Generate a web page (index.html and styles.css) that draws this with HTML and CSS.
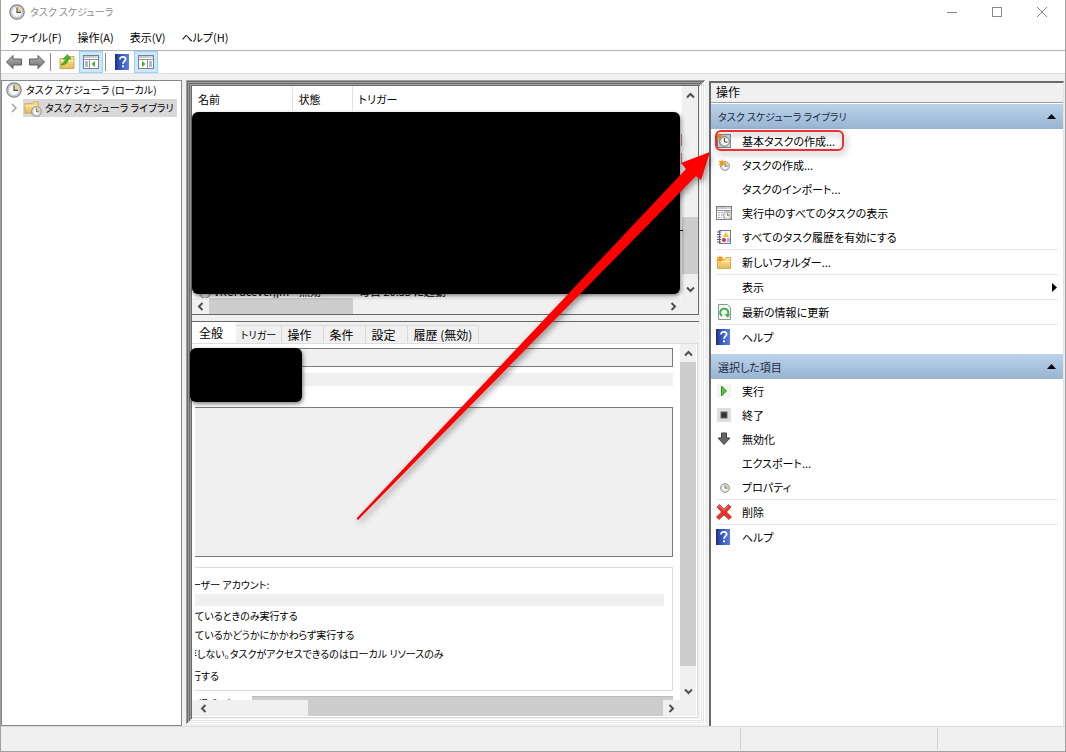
FILE: index.html
```html
<!DOCTYPE html>
<html lang="ja">
<head>
<meta charset="utf-8">
<title>タスク スケジューラ</title>
<link rel="stylesheet" href="styles.css">
</head>
<body>
<svg class="defs" aria-hidden="true">
  <defs>
    <linearGradient id="gArrow" x1="0" y1="0" x2="0" y2="1"><stop offset="0" stop-color="#b5b5b5"/><stop offset="1" stop-color="#6f6f6f"/></linearGradient>
    <linearGradient id="gFolder" x1="0" y1="0" x2="0" y2="1"><stop offset="0" stop-color="#fbe49c"/><stop offset="1" stop-color="#e6bd58"/></linearGradient>
    <linearGradient id="gHelp" x1="0" y1="0" x2="1" y2="0"><stop offset="0" stop-color="#1f3a9a"/><stop offset=".3" stop-color="#2f50bd"/><stop offset="1" stop-color="#5b7ee0"/></linearGradient>
    <symbol id="clock" viewBox="0 0 16 16">
      <circle cx="8" cy="8" r="7.2" fill="#d3d7dc" stroke="#80868c" stroke-width="1.2"/>
      <circle cx="8" cy="8" r="5.4" fill="#f6f9fc" stroke="#a4a9ae" stroke-width=".6"/>
      <path d="M8 8V3a5 5 0 0 1 5 5z" fill="#f4cf7e"/>
      <path d="M8 3.6V8.4H12" fill="none" stroke="#444c58" stroke-width="1.1"/>
    </symbol>
    <symbol id="help" viewBox="0 0 14 16">
      <rect width="14" height="16" fill="url(#gHelp)"/><rect width="2" height="16" fill="#26366f"/>
      <path d="M5 5.4C5 3.5 6.200 2.800 7.800 2.800S10.600 3.700 10.600 5.200C10.600 7 8 7.300 8 9.800" fill="none" stroke="#fff" stroke-width="1.800"/>
      <rect x="7" y="11.300" width="2" height="2" fill="#fff"/>
    </symbol>
    <symbol id="folder" viewBox="0 0 16 16">
      <path d="M1 4.500h8l1-2h5v12H1z" fill="url(#gFolder)" stroke="#c99a35" stroke-width=".8"/>
      <path d="M1.500 7h13" stroke="#fdf0c0"/>
    </symbol>
    <symbol id="pane" viewBox="0 0 16 14">
      <rect x=".5" y=".5" width="15" height="13" fill="#fff" stroke="#7c8188"/>
      <path d="M1 2h14M1 4.500h14" stroke="#8e949c"/>
      <path d="M11 2h1M13 2h1" stroke="#fff"/>
    </symbol>
    <symbol id="spark" viewBox="0 0 8 8"><path d="M4 0l.9 2.300L7.500 1.500 6 4l2 1.500-2.600.2L4 8 3 5.700.2 6 2 4 .5 1.500l2.600.8z" fill="#f09a1a"/></symbol>
  </defs>
</svg>
<div class="window">
  <header class="titlebar">
    <svg class="ico16"><use href="#clock"/></svg>
    <h1 class="title">タスク スケジューラ</h1>
    <div class="caption">
      <button class="capbtn" aria-label="最小化"><svg width="12" height="12"><path d="M1 6.500h10" stroke="#8a8a8a"/></svg></button>
      <button class="capbtn" aria-label="最大化"><svg width="12" height="12"><rect x="1.500" y="1.500" width="9" height="9" fill="none" stroke="#8a8a8a"/></svg></button>
      <button class="capbtn" aria-label="閉じる"><svg width="12" height="12"><path d="M1 1l10 10M11 1L1 11" stroke="#8a8a8a"/></svg></button>
    </div>
  </header>
  <nav class="menubar">
    <button>ファイル(F)</button><button>操作(A)</button><button>表示(V)</button><button>ヘルプ(H)</button>
  </nav>
  <div class="toolbar">
    <button class="tool narrow" aria-label="戻る"><svg width="18" height="16" viewBox="0 0 18 16"><path d="M1.500 8L8 1.500V5h8.500v6H8v3.500z" fill="url(#gArrow)" stroke="#5c5c5c"/></svg></button>
    <button class="tool narrow" aria-label="進む"><svg width="18" height="16" viewBox="0 0 18 16"><path d="M16.500 8L10 1.500V5H1.500v6H10v3.500z" fill="url(#gArrow)" stroke="#5c5c5c"/></svg></button>
    <span class="toolsep"></span>
    <button class="tool" aria-label="上へ"><svg width="16" height="16"><use href="#folder"/><path d="M2 11C3 9 6 8 6.500 5H4L8.500.5 12 5H9.500C9 9 6 11 2 11z" fill="#3fb52c" stroke="#2b8a20" stroke-width=".5"/></svg></button>
    <button class="tool on" aria-label="コンソール ツリーの表示"><svg width="16" height="14"><use href="#pane" width="16" height="14"/><path d="M6.500 5v8" stroke="#8e949c"/><path d="M2 7h3M2 9h3M2 11h3" stroke="#4d79b5"/><path d="M12 6v6L8.500 9z" fill="#45b02f"/></svg></button>
    <span class="toolsep"></span>
    <button class="tool" aria-label="ヘルプ"><svg width="14" height="16"><use href="#help"/></svg></button>
    <button class="tool on" aria-label="操作ウィンドウの表示"><svg width="16" height="14"><use href="#pane" width="16" height="14"/><path d="M9.500 5v8" stroke="#8e949c"/><path d="M11 7h3M11 9h3M11 11h3" stroke="#4d79b5"/><path d="M4 6v6L7.500 9z" fill="#45b02f"/></svg></button>
  </div>

  <main class="work">
    <aside class="tree">
      <a class="node root" href="#root"><svg class="ico16"><use href="#clock"/></svg><span>タスク スケジューラ (ローカル)</span></a>
      <div class="branch">
        <svg width="8" height="10"><path d="M2 1l4 4-4 4" fill="none" stroke="#a0a0a0" stroke-width="1.500"/></svg>
        <a class="node sel" href="#library"><svg width="18" height="18"><use href="#folder" width="15" height="16"/><use href="#clock" x="7" y="7" width="11" height="11"/></svg><span>タスク スケジューラ ライブラリ</span></a>
      </div>
    </aside>

    <section class="centre">
      <div class="tasks">
        <div class="listview">
          <table class="list">
            <thead><tr><th class="cname">名前</th><th class="cstate">状態</th><th>トリガー</th></tr></thead>
            <tbody><tr class="gap"><td colspan="3"></td></tr><tr><td><svg width="12" height="12"><use href="#clock"/></svg> VRCFaceVer,jm</td><td>無効</td><td>毎日 20:33 に起動</td></tr></tbody>
          </table>
        </div>
        <div class="vbar">
          <button aria-label="上へスクロール"><svg width="9" height="7"><path d="M1 5.500l3.500-3.500L8 5.500" class="chev"/></svg></button>
          <span class="grow"></span><span class="thumb short"></span>
          <button class="down" aria-label="下へスクロール"><svg width="9" height="7"><path d="M1 1.500L4.500 5 8 1.500" class="chev"/></svg></button>
        </div>
        <div class="hbar">
          <button aria-label="左へスクロール"><svg width="7" height="9"><path d="M5.500 1L2 4.500 5.500 8" class="chev"/></svg></button>
          <span class="thumb first"></span><span class="grow"></span>
          <button aria-label="右へスクロール"><svg width="7" height="9"><path d="M1.500 1L5 4.500 1.500 8" class="chev"/></svg></button>
        </div>
      </div>

      <div class="detail">
        <div class="tabs" role="tablist">
          <button role="tab" class="tab active">全般</button><button role="tab" class="tab trig">トリガー</button><button role="tab" class="tab">操作</button><button role="tab" class="tab">条件</button><button role="tab" class="tab">設定</button><button role="tab" class="tab wide">履歴 (無効)</button>
        </div>
        <div class="page">
          <div class="form">
            <input class="field" aria-label="名前" readonly>
            <div class="strip"></div>
            <textarea class="desc" aria-label="説明" readonly></textarea>
            <div class="group">
              <p class="line cut4">ーザー アカウント:</p>
              <div class="strip account"></div>
              <p class="line">ているときのみ実行する</p>
              <p class="line">ているかどうかにかかわらず実行する</p>
              <p class="line cut8">存しない。タスクがアクセスできるのはローカル リソースのみ</p>
              <p class="line last cut4">行する</p>
            </div>
            <div class="config"><span class="label">構成(ビ):</span><span class="combo"></span></div>
          </div>
          <div class="vbar">
            <button aria-label="上へスクロール"><svg width="9" height="7"><path d="M1 5.500l3.500-3.500L8 5.500" class="chev"/></svg></button>
            <span class="thumb grow"></span>
            <button class="tall" aria-label="下へスクロール"><svg width="9" height="7"><path d="M1 1.500L4.500 5 8 1.500" class="chev"/></svg></button>
          </div>
          <div class="hbar">
            <button aria-label="左へスクロール"><svg width="7" height="9"><path d="M5.500 1L2 4.500 5.500 8" class="chev"/></svg></button>
            <span class="track"></span><span class="thumb grow"></span>
            <button aria-label="右へスクロール"><svg width="7" height="9"><path d="M1.500 1L5 4.500 1.500 8" class="chev"/></svg></button>
          </div>
          <div class="corner"></div>
        </div>
      </div>
    </section>

    <aside class="actions">
      <h2 class="paneTitle">操作</h2>
      <h3 class="section library"><span>タスク スケジューラ ライブラリ</span><svg width="9" height="5"><path d="M0 5L4.500 0 9 5z"/></svg></h3>
      <div class="items">
        <button class="item"><svg class="ico16"><rect x="1.500" y="1.500" width="13" height="13" fill="#d5d8da" stroke="#858a8e"/><circle cx="8.500" cy="8.500" r="4.800" fill="#f5f8f4" stroke="#5f7d80"/><path d="M8.500 5v4h3" fill="none" stroke="#444"/><use href="#spark" width="7" height="7"/></svg><span>基本タスクの作成...</span></button>
        <button class="item"><svg class="ico16"><use href="#clock" x="4" y="4" width="10" height="10"/><use href="#spark" x="2" y="2" width="8" height="8"/></svg><span>タスクの作成...</span></button>
        <button class="item"><svg class="ico16"></svg><span>タスクのインポート...</span></button>
        <button class="item"><svg class="ico16"><use href="#pane" y="1" width="16" height="14"/><path d="M2 7.500h6M2 10h5M2 12.500h4" stroke="#9aa0a6" stroke-dasharray="2 1"/><use href="#clock" x="7" y="6" width="9" height="9"/></svg><span>実行中のすべてのタスクの表示</span></button>
        <button class="item"><svg class="ico16"><rect x="3.500" y="1.500" width="11" height="13" fill="#f2f3fa" stroke="#73799a"/><path d="M1 3h4M1 5.500h4M1 8h4M1 10.500h4M1 13h4" stroke="#50556a"/><path d="M10 3l3 5H7z" fill="#f2c319"/><circle cx="8" cy="11" r="2" fill="#d93030"/><path d="M11 10h3M11 12h3" stroke="#7280b5"/></svg><span>すべてのタスク履歴を有効にする</span></button>
        <hr>
        <button class="item"><svg class="ico16"><use href="#folder" y="1" width="16" height="15"/><use href="#spark" y="1" width="8" height="8"/></svg><span>新しいフォルダー...</span></button>
        <hr>
        <button class="item"><svg class="ico16"></svg><span>表示</span><svg class="more" width="6" height="9"><path d="M0 0l5 4.500L0 9z"/></svg></button>
        <hr>
        <button class="item"><svg class="ico16"><path d="M2.500.5h9l3 3v12h-12z" fill="#f6f8f6" stroke="#8c9590"/><path d="M6 12A4 4 0 1 1 11.800 10.500" fill="none" stroke="#3db047" stroke-width="2"/><path d="M8.500 10h5.500l-2 4z" fill="#3db047"/></svg><span>最新の情報に更新</span></button>
        <hr>
        <button class="item"><svg class="ico16"><use href="#help" width="14" height="16"/></svg><span>ヘルプ</span></button>
      </div>
      <h3 class="section"><span>選択した項目</span><svg width="9" height="5"><path d="M0 5L4.500 0 9 5z"/></svg></h3>
      <div class="items">
        <button class="item"><svg class="ico16"><rect x="1" y="1" width="14" height="14" fill="#f4f4f4"/><path d="M5.500 3v10l5-5z" fill="#52c43c" stroke="#2d9a22"/></svg><span>実行</span></button>
        <button class="item"><svg class="ico16"><rect x="1" y="1" width="14" height="14" fill="#dedede"/><rect x="5" y="5" width="6" height="6" fill="#333" stroke="#666"/></svg><span>終了</span></button>
        <button class="item"><svg class="ico16"><path d="M5.500 2h5v5h3.500L8 13.500 2 7h3.500z" fill="#666" stroke="#3f3f3f"/></svg><span>無効化</span></button>
        <button class="item"><svg class="ico16"></svg><span>エクスポート...</span></button>
        <button class="item"><svg class="ico16"><use href="#clock" x="4" y="4" width="10" height="10"/></svg><span>プロパティ</span></button>
        <hr>
        <button class="item"><svg class="ico16"><path d="M1 3l2.500-2.500L8 5l4.500-4.500L15 3l-4.500 5L15.500 13 13 15.500 8 11l-5 4.500L.5 13 5.500 8z" fill="#e8352c" stroke="#b3201b" stroke-width=".7"/><path d="M2 3l1.500-1.200L8 6.300l4.500-4.500" fill="none" stroke="#f78a80"/></svg><span>削除</span></button>
        <hr>
        <button class="item"><svg class="ico16"><use href="#help" width="14" height="16"/></svg><span>ヘルプ</span></button>
      </div>
    </aside>
  </main>
  <footer class="status"><span></span><span></span><span></span></footer>

  <div class="mask maskList"></div>
  <div class="mask maskName"></div>
  <svg class="marks" width="1066" height="752" aria-hidden="true">
    <path d="M681.500 134v12M681.500 153v11" stroke="#a06868"/><path d="M680 230.500h3" stroke="#000"/>
    <rect x="716" y="131" width="127" height="19" rx="5" fill="none" stroke="#ed2f35" stroke-width="2"/>
    <path d="M356.500 518.500L686 169l-5-6 29-11-9 28-5-4L358 520z" fill="#fe0000"/>
  </svg>
</div>
</body>
</html>
```
FILE: styles.css
```css
* { box-sizing: border-box; }
body {
  margin: 0;
  font: 12px/16px "Noto Sans CJK JP", sans-serif;
  font-feature-settings: "palt";
  color: #000;
}
button, input, textarea {
  font: inherit;
  font-feature-settings: inherit;
  color: inherit;
  border: 0;
  padding: 0;
  margin: 0;
  background: none;
  border-radius: 0;
}
h1, h2, h3, p { margin: 0; font-size: inherit; font-weight: 400; }
a { color: inherit; text-decoration: none; }
svg { display: block; flex: none; }
.defs { position: absolute; width: 0; height: 0; }
.ico16 { width: 16px; height: 16px; }

.window {
  position: relative;
  display: flex;
  flex-direction: column;
  min-height: 100vh;
  background: #f0f0f0;
  border: 1px solid #a0a0a0;
  border-top: 0;
  overflow: hidden;
}
.titlebar { display: flex; flex: none; align-items: center; gap: 5px; height: 24px; padding-left: 8px; background: #fff; }
.title { flex: 1; color: #909090; font-size: 10px; }
.caption { display: flex; margin-right: 1px; }
.capbtn { display: grid; place-items: center; width: 45px; height: 24px; }
.menubar { display: flex; flex: none; gap: 16px; height: 27px; padding: 0 9px; background: #fff; border-bottom: 1px solid #b2b2bc; font-size: 11px; }
.toolbar { display: flex; flex: none; align-items: center; height: 23px; padding-left: 1px; background: #fff; border-bottom: 1px solid #dcdcdc; }
.tool { display: grid; place-items: center; width: 24px; height: 22px; border: 1px solid transparent; }
.narrow { width: 23px; }
.tool.on { background: #cce8ff; border-color: #99d1ff; }
.toolsep { width: 1px; height: 18px; margin: 0 4px 0 2px; background: #888; }

.work { flex: 1; display: flex; padding-top: 6px; }
.tree { width: 181px; background: #fff; border: 1px solid #828790; overflow: hidden; white-space: nowrap; font-size: 10px; }
.node { display: flex; align-items: center; gap: 4px; height: 18px; }
.root { padding-left: 4px; }
.branch { display: flex; align-items: center; gap: 5px; padding-left: 8px; }
.sel { background: #d9d9d9; gap: 3px; padding: 0 3px 0 1px; }

.centre {
  flex: 1;
  min-width: 0;
  display: flex;
  flex-direction: column;
  gap: 6px;
  margin: 0 4px 2px;
  padding: 6px;
  background: #f0f0f0;
  box-shadow: inset 1px 1px #a0a0a0, inset -1px -1px #fff, inset 2px 2px #696969, inset -2px -2px #e3e3e3,
    inset 3px 3px #a0a0a0, inset -3px -3px #fff, inset 4px 4px #696969, inset -4px -4px #e3e3e3,
    inset 5px 5px #a0a0a0, inset -5px -5px #fff, inset 6px 6px #696969;
}
.tasks, .page { display: grid; grid-template-columns: minmax(0, 1fr) 16px; }
.tasks { grid-template-rows: 212px 16px; background: #f0f0f0; border-right: 1px solid #696969; border-bottom: 1px solid #696969; }
.listview { overflow: hidden; background: #fff; font-size: 11px; }
.list { width: 100%; border-collapse: collapse; table-layout: fixed; }
.list th { height: 25px; padding: 0 6px; font-weight: 400; text-align: left; border-right: 1px solid #e2e2e2; }
.list th:last-child { border-right: 0; }
.list td { height: 18px; padding: 0 7px; white-space: nowrap; }
.list td svg { display: inline-block; vertical-align: middle; }
.list .gap td { height: 171px; }
.cname { width: 100px; }
.cstate { width: 60px; }

.vbar, .hbar { display: flex; background: #f0f0f0; }
.vbar { flex-direction: column; padding-top: 1px; }
.vbar button, .hbar button { display: grid; place-items: center; height: 17px; }
.hbar { height: 16px; }
.hbar button { width: 17px; height: 16px; }
.vbar .down { margin-top: 7px; }
.vbar .tall { margin-top: 17px; }
.thumb { background: #cdcdcd; }
.grow { flex: 1; }
.short { height: 57px; }
.first { width: 144px; }
.track { width: 96px; }
.chev { fill: none; stroke: #505050; stroke-width: 2; }

.detail { flex: 1; display: flex; flex-direction: column; border-top: 1px solid #696969; padding-right: 1px; }
.tabs { display: flex; align-items: flex-end; height: 21px; }
.tab { width: 42px; height: 18px; padding: 0 6px 0 0; border: 1px solid #d9d9d9; border-left: 0; border-bottom: 0; line-height: 15px; text-align: center; white-space: nowrap; }
.tab.active { width: 44px; height: 21px; background: #fff; border: 0; }
.tab.trig { width: 46px; padding: 0; font-size: 10px; }
.tab.wide { width: 71px; padding: 0; }
.page { flex: 1; grid-template-rows: minmax(0, 1fr) 16px; background: #fff; border: solid #dcdcdc; border-width: 1px 1px 1px 0; padding: 0 1px 1px 0; }
.form { display: flex; flex-direction: column; overflow: hidden; padding: 4px 7px 0 3px; }
.field { height: 19px; background: #f0f0f0; border: 1px solid #7a7a7a; border-left: 0; }
.strip { height: 13px; margin-top: 6px; background: #f0f0f0; }
.desc { display: block; height: 150px; margin-top: 21px; background: #f0f0f0; border: 1px solid #7a7a7a; border-left: 0; resize: none; }
.group { margin-top: 10px; height: 124px; padding-top: 7px; border: 1px solid #dcdcdc; border-left: 0; font-size: 10px; }
.line { height: 19px; line-height: 19px; overflow: hidden; white-space: nowrap; }
.account { height: 12px; margin: 0 8px 0 0; }
.last { margin-top: 3px; }
.cut4 { text-indent: -4px; }
.cut8 { text-indent: -8px; }
.config { display: flex; gap: 8px; height: 4px; margin-top: 5px; font-size: 10px; overflow: hidden; }
.label { width: 49px; padding-left: 3px; }
.combo { flex: 1; background: #cdcdcd; border-top: 1px solid #bcbcbc; }
.page > .hbar { padding-left: 3px; }
.corner { background: #f0f0f0; }

.actions { width: 355px; margin-right: 1px; background: #fff; border: solid #696969; border-width: 2px 0 0 2px; border-right: 1px solid #e3e3e3; margin-top: 1px; font-size: 11px; }
.paneTitle { height: 20px; padding-left: 5px; line-height: 18px; background: #f0f0f0; border-bottom: 1px solid #a0a0a0; margin-bottom: 1px; font-size: 12px; }
.section { display: flex; align-items: center; justify-content: space-between; height: 25px; padding: 0 7px; background: linear-gradient(#bbd3eb, #99b4d1); color: #1c2a3c; }
.library { font-size: 10px; }
.section svg { fill: #000; }
.items { padding: 0 5px; }
.items:not(:last-child) { padding-bottom: 5px; }
.item { display: flex; align-items: center; gap: 10px; width: 100%; height: 24px; text-align: left; }
.more { margin-left: auto; }
.items hr { height: 1px; margin: 0; border: 0; background: #e8e8e8; }

.status { display: flex; flex: none; height: 25px; border-top: 1px solid #dcdcdc; }
.status span { border-right: 1px solid #d0d0d0; margin: 1px 0; }
.status span:nth-child(1) { flex: 1; }
.status span:nth-child(2) { width: 197px; }
.status span:nth-child(3) { width: 127px; border: 0; }

.mask { position: absolute; background: #000; border-radius: 6px; box-shadow: 1px 2px 4px rgba(0, 0, 0, .5); }
.maskList { left: 191px; top: 112px; width: 488px; height: 182px; }
.maskName { left: 189px; top: 348px; width: 112px; height: 54px; }
.marks { position: absolute; left: -1px; top: 0; pointer-events: none; filter: drop-shadow(2px 3px 3px rgba(0, 0, 0, .4)); }
```
